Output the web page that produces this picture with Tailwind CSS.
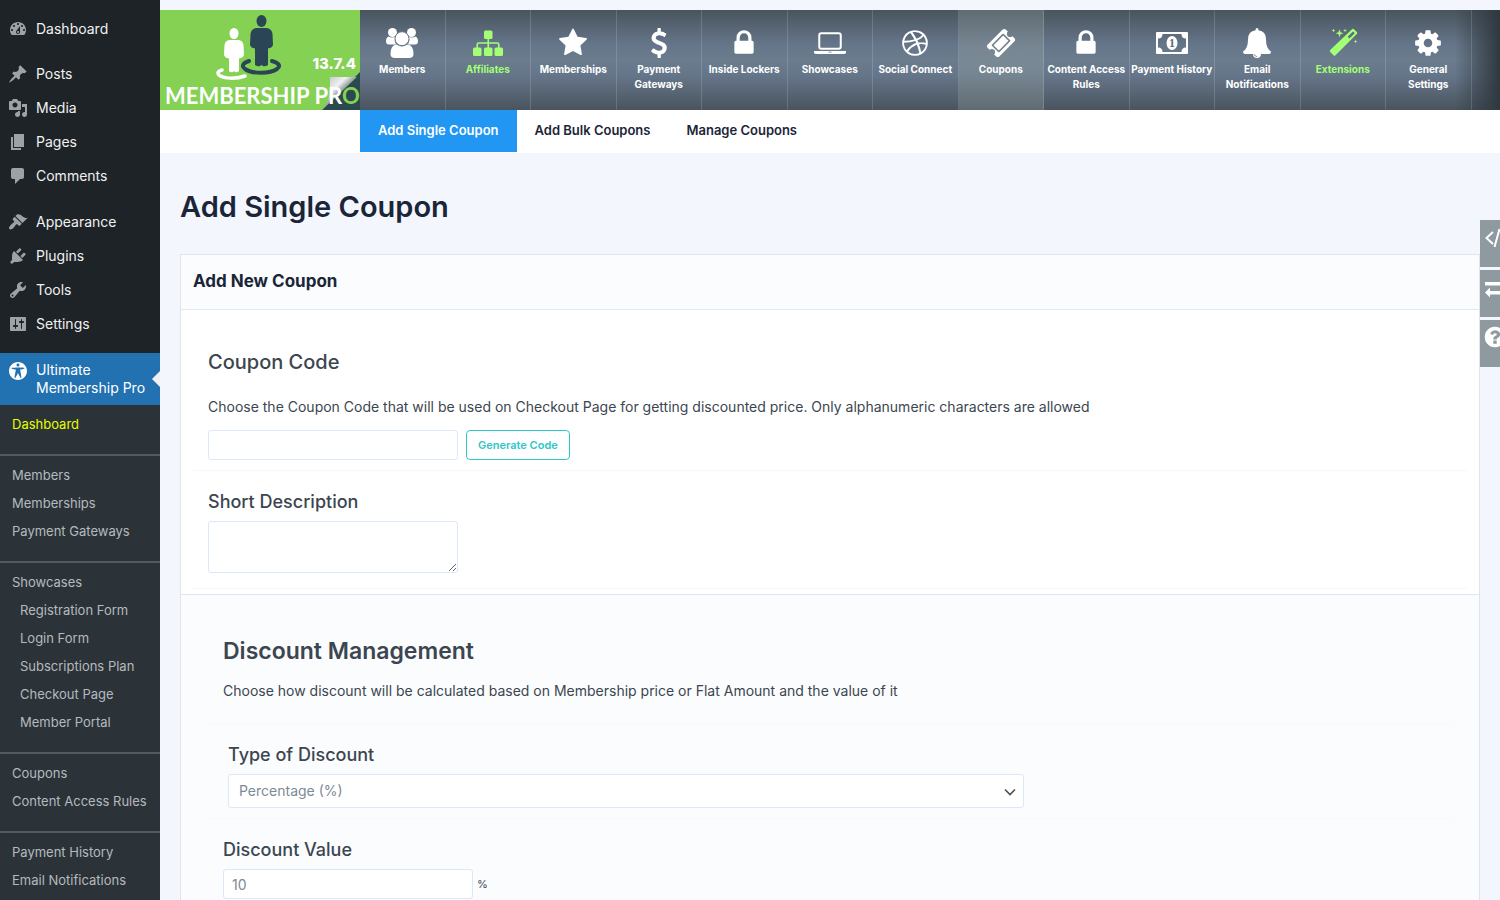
<!DOCTYPE html>
<html lang="en">
<head>
    <meta charset="UTF-8">
    <meta name="viewport" content="width=device-width, initial-scale=1">
    <script src="https://cdn.jsdelivr.net/npm/@tailwindcss/browser@4"></script>
    <title>Add Single Coupon</title>
</head>
<body class="flex min-h-screen bg-[#f4f6fe] font-['Inter',sans-serif] text-[#3b4650]">
    <!--Admin Sidebar-->
    <aside class="w-40 shrink-0 bg-[#1d2327] text-sm text-[#f0f0f1]">
        <nav class="pt-3">
            <a href="#" class="flex h-[34px] items-center gap-2 pl-2">
                <svg class="size-5 text-[#9ca2a7]" viewBox="0 0 20 20" fill="currentColor"><path d="M3.76 16h12.48c1.1-1.37 1.76-3.11 1.76-5 0-4.42-3.58-8-8-8s-8 3.58-8 8c0 1.89.66 3.63 1.76 5zM10 4c.55 0 1 .45 1 1s-.45 1-1 1-1-.45-1-1 .45-1 1-1zM6 6c.55 0 1 .45 1 1s-.45 1-1 1-1-.45-1-1 .45-1 1-1zm8 0c.55 0 1 .45 1 1s-.45 1-1 1-1-.45-1-1 .45-1 1-1zm-5.37 5.55L12 7v6c0 1.1-.9 2-2 2s-2-.9-2-2c0-.57.24-1.08.63-1.45zM4 10c.55 0 1 .45 1 1s-.45 1-1 1-1-.45-1-1 .45-1 1-1zm12 0c.55 0 1 .45 1 1s-.45 1-1 1-1-.45-1-1 .45-1 1-1zm-5 3c0-.55-.45-1-1-1s-1 .45-1 1 .45 1 1 1 1-.45 1-1z" fill-rule="evenodd"/></svg>
                Dashboard
            </a>
            <div class="mt-[11px]">
                <a href="#" class="flex h-[34px] items-center gap-2 pl-2">
                    <svg class="size-5 text-[#9ca2a7]" viewBox="0 0 20 20" fill="currentColor"><path d="M10.44 3.02l1.82-1.82 6.36 6.35-1.83 1.82c-1.05-.68-2.48-.57-3.41.36l-.75.75c-.92.93-1.04 2.35-.35 3.41l-1.83 1.82-2.41-2.41-2.8 2.79c-.42.42-3.38 2.71-3.8 2.29s1.86-3.39 2.28-3.81l2.79-2.79L4.1 9.36l1.83-1.82c1.05.69 2.48.57 3.4-.36l.75-.75c.93-.92 1.05-2.35.36-3.41z"/></svg>
                    Posts
                </a>
                <a href="#" class="flex h-[34px] items-center gap-2 pl-2">
                    <svg class="size-5 text-[#9ca2a7]" viewBox="0 0 20 20" fill="currentColor"><path fill-rule="evenodd" d="M13 11V4c0-.55-.45-1-1-1h-1.67L9 1H5L3.67 3H2c-.55 0-1 .45-1 1v7c0 .55.45 1 1 1h10c.55 0 1-.45 1-1zM7 4.5c1.38 0 2.5 1.12 2.5 2.5S8.38 9.5 7 9.5 4.5 8.38 4.5 7 5.62 4.5 7 4.5zM14 6h5v10.5c0 1.38-1.12 2.5-2.5 2.5S14 17.88 14 16.5s1.12-2.5 2.5-2.5c.17 0 .34.02.5.05V9h-3V6zm-4 8.05V13h2v3.5c0 1.38-1.12 2.5-2.5 2.5S7 17.88 7 16.5 8.12 14 9.5 14c.17 0 .34.02.5.05z"/></svg>
                    Media
                </a>
                <a href="#" class="flex h-[34px] items-center gap-2 pl-2">
                    <svg class="size-5 text-[#9ca2a7]" viewBox="0 0 20 20" fill="currentColor"><path d="M6 15V2h10v13H6zm-1 1h8v2H3V5h2v11z"/></svg>
                    Pages
                </a>
                <a href="#" class="flex h-[34px] items-center gap-2 pl-2">
                    <svg class="size-5 text-[#9ca2a7]" viewBox="0 0 20 20" fill="currentColor"><path d="M5 2h9c1.1 0 2 .9 2 2v7c0 1.1-.9 2-2 2h-2l-5 5v-5H5c-1.1 0-2-.9-2-2V4c0-1.1.9-2 2-2z"/></svg>
                    Comments
                </a>
            </div>
            <div class="my-3">
                <a href="#" class="flex h-[34px] items-center gap-2 pl-2">
                    <svg class="size-5 text-[#9ca2a7]" viewBox="0 0 20 20" fill="currentColor"><path d="M14.48 11.06L7.41 3.99l1.5-1.5c.5-.56 2.3-.47 3.51.32 1.21.8 1.43 1.28 2.91 2.1 1.18.64 2.45 1.26 4.45.85zm-.71.71L6.7 4.7 4.93 6.47c-.39.39-.39 1.02 0 1.41l1.06 1.06c.39.39.39 1.03 0 1.42-.6.6-1.43 1.11-2.21 1.69-.35.26-.7.53-1.01.84C1.43 14.23.4 16.08 1.4 17.07c.99 1 2.84-.03 4.18-1.36.31-.31.58-.66.85-1.02.57-.78 1.08-1.61 1.69-2.21.39-.39 1.02-.39 1.41 0l1.06 1.06c.39.39 1.02.39 1.41 0z"/></svg>
                    Appearance
                </a>
                <a href="#" class="flex h-[34px] items-center gap-2 pl-2">
                    <svg class="size-5 text-[#9ca2a7]" viewBox="0 0 20 20" fill="currentColor"><path d="M13.11 4.36L9.87 7.6 8 5.73l3.24-3.24c.35-.34 1.05-.2 1.56.32.52.51.66 1.21.31 1.55zm-8 1.77l.91-1.12 9.01 9.01-1.19.84c-.71.71-2.63 1.16-3.82 1.16H6.14L4.9 17.26c-.59.59-1.54.59-2.12 0-.59-.58-.59-1.53 0-2.12l1.24-1.24v-3.88c0-1.13.4-3.19 1.09-3.89zm7.26 3.97l3.24-3.24c.34-.35 1.04-.21 1.55.31.52.51.66 1.21.31 1.55l-3.24 3.25z"/></svg>
                    Plugins
                </a>
                <a href="#" class="flex h-[34px] items-center gap-2 pl-2">
                    <svg class="size-5 text-[#9ca2a7]" viewBox="0 0 20 20" fill="currentColor"><path d="M16.68 9.77c-1.34 1.34-3.3 1.67-4.95.99l-5.41 6.52c-.99.99-2.59.99-3.58 0s-.99-2.59 0-3.57l6.52-5.42c-.68-1.65-.35-3.61.99-4.95 1.28-1.28 3.12-1.62 4.72-1.06l-2.89 2.89 2.82 2.82 2.86-2.87c.53 1.58.18 3.39-1.08 4.65zM3.81 16.21c.4.39 1.04.39 1.43 0 .4-.4.4-1.04 0-1.43-.39-.4-1.03-.4-1.43 0-.39.39-.39 1.03 0 1.43z"/></svg>
                    Tools
                </a>
                <a href="#" class="flex h-[34px] items-center gap-2 pl-2">
                    <svg class="size-5 text-[#9ca2a7]" viewBox="0 0 20 20" fill="currentColor"><path d="M18 16V4c0-.55-.45-1-1-1H3c-.55 0-1 .45-1 1v12c0 .55.45 1 1 1h14c.55 0 1-.45 1-1zM8 11h1c.55 0 1 .45 1 1s-.45 1-1 1H8v1.5c0 .28-.22.5-.5.5s-.5-.22-.5-.5V13H6c-.55 0-1-.45-1-1s.45-1 1-1h1V5.5c0-.28.22-.5.5-.5s.5.22.5.5V11zm5-2h-1c-.55 0-1-.45-1-1s.45-1 1-1h1V5.5c0-.28.22-.5.5-.5s.5.22.5.5V7h1c.55 0 1 .45 1 1s-.45 1-1 1h-1v5.500c0 .28-.22.5-.5.5s-.5-.22-.5-.5V9z"/></svg>
                    Settings
                </a>
            </div>
            <a href="#" class="relative flex h-[52px] gap-2 bg-[#2271b1] py-2 pl-2 leading-[18px] text-white">
                <svg class="size-5 shrink-0" viewBox="0 0 20 20" fill="currentColor"><path d="M19 10c0-4.970-4.030-9-9-9s-9 4.030-9 9 4.030 9 9 9 9-4.030 9-9zm-9-7.400c.83 0 1.500.67 1.500 1.500s-.67 1.510-1.500 1.510c-.82 0-1.500-.68-1.500-1.510s.68-1.500 1.500-1.500zM3.400 7.360c0-.65 6.600-.76 6.600-.76s6.600.11 6.600.76-4.470 1.400-4.470 1.400 1.690 8.140 1.060 8.380c-.62.24-3.190-5.190-3.190-5.190s-2.560 5.430-3.180 5.190c-.63-.24 1.060-8.380 1.060-8.380S3.400 8.010 3.400 7.360z"/></svg>
                <span>Ultimate<br>Membership Pro</span>
                <span class="absolute top-[18px] right-0 border-y-8 border-r-8 border-y-transparent border-r-[#f0f0f1]"></span>
            </a>
        </nav>

        <!--Plugin Submenu-->
        <nav class="bg-[#2c3338] text-[13px] text-[#b5babf]">
            <div class="pt-[5px] pb-4">
                <a href="#" class="flex h-7 items-center pl-3 text-[#e4ff00]">Dashboard</a>
            </div>
            <div class="border-t-2 border-[#4f5a62] pt-[5px] pb-4">
                <a href="#" class="flex h-7 items-center pl-3">Members</a>
                <a href="#" class="flex h-7 items-center pl-3">Memberships</a>
                <a href="#" class="flex h-7 items-center pl-3">Payment Gateways</a>
            </div>
            <div class="border-t-2 border-[#4f5a62] pt-[5px] pb-4">
                <a href="#" class="flex h-7 items-center pl-3">Showcases</a>
                <a href="#" class="flex h-7 items-center pl-5">Registration Form</a>
                <a href="#" class="flex h-7 items-center pl-5">Login Form</a>
                <a href="#" class="flex h-7 items-center pl-5">Subscriptions Plan</a>
                <a href="#" class="flex h-7 items-center pl-5">Checkout Page</a>
                <a href="#" class="flex h-7 items-center pl-5">Member Portal</a>
            </div>
            <div class="border-t-2 border-[#4f5a62] pt-[5px] pb-4">
                <a href="#" class="flex h-7 items-center pl-3">Coupons</a>
                <a href="#" class="flex h-7 items-center pl-3">Content Access Rules</a>
            </div>
            <div class="border-t-2 border-[#4f5a62] pt-[5px] pb-1.5">
                <a href="#" class="flex h-7 items-center pl-3">Payment History</a>
                <a href="#" class="flex h-7 items-center pl-3">Email Notifications</a>
            </div>
        </nav>
    </aside>

    <div class="min-w-0 flex-1 pt-[10px]">
        <!--Header-->
        <header class="flex h-[100px]">
            <a href="#" class="relative w-[200px] shrink-0" aria-label="Membership Pro">
                <svg class="h-[100px] w-[200px]" viewBox="0 0 200 100">
                    <defs>
                        <linearGradient id="curl" x1="0" y1="0" x2="1" y2="1">
                            <stop offset="0" stop-color="#b9babd"/>
                            <stop offset=".35" stop-color="#f1f1f3"/>
                            <stop offset=".5" stop-color="#8f9896"/>
                        </linearGradient>
                    </defs>
                    <rect width="200" height="100" fill="#84d154"/>
                    <!-- white member -->
                    <path d="M62 60c-4 1-5 3-3 5 4 4 18 4 26 1" fill="none" stroke="#fff" stroke-width="3.5" stroke-linecap="round"/>
                    <ellipse cx="74" cy="23.500" rx="4.500" ry="5.500" fill="#fff"/>
                    <path d="M69 30q-4 1-4.500 5l-.5 10q1 3 5 3.500V61q2 2 4 1l1-1 1 1q2 1 4-1V48.500q4-.5 5-3.500l-.5-10q-.5-4-4.500-5z" fill="#fff"/>
                    <!-- dark member -->
                    <path d="M89 51c-6 2-8 5-4 8 7 5 25 5 32 0 4-3 2-6-5-8" fill="none" stroke="#2a4656" stroke-width="4" stroke-linecap="round"/>
                    <ellipse cx="101.500" cy="11" rx="5" ry="6" fill="#2a4656"/>
                    <path d="M96 18q-5 1-5.500 6L90 35q1 3 5 3.500V55q3 2 5 1l1.500-1 1.500 1q2 1 5-1V38.500q4-.5 5-3.500l-.5-11q-.5-5-5.500-6z" fill="#2a4656"/>
                    <path d="M162 100L200 62V100z" fill="#2b4a50"/>
                    <path d="M170 67H197L162 100Q170 90 170 80z" fill="url(#curl)"/>
                    <text x="5" y="94" fill="#fff" font-family="Lato" font-weight="700" font-size="22">MEMBERSHIP PR<tspan fill="#84d154">O</tspan></text>
                </svg>
                <span class="absolute top-11 right-1 text-[15px] leading-5 font-extrabold text-white">13.7.4</span>
            </a>
            <nav class="flex flex-1 bg-[linear-gradient(to_right,transparent_96%,#2f383f),linear-gradient(to_bottom,#49545e,#66768a_35%,#6b7c8d_50%,#66768a_65%,#49545e)] text-center text-[10px] leading-[15px] font-bold text-white">
                <a href="#" class="flex w-[7.5%] flex-col items-center border-r border-white/15 pt-[18px]">
                    <svg class="mb-1 h-[30px] w-8" viewBox="0 0 32 30" fill="currentColor"><circle cx="6.500" cy="4.500" r="4.500"/><circle cx="25.500" cy="4.500" r="4.500"/><path d="M2.500 8.500Q5 10 9 9q-1 4 1 7.500H3q-3 0-3-3 0-4 2.500-5zM29.500 8.500Q27 10 23 9q1 4-1 7.500h7q3 0 3-3 0-4-2.500-5z"/><circle cx="16" cy="10.700" r="7" stroke="#66768a" stroke-width="1"/><path d="M10.500 16.500q5.500 4 11 0 6 .5 6 9.500 0 4-4.500 4H9q-4.500 0-4.500-4 0-9 6-9.500z"/></svg>
                    Members
                </a>
                <a href="#" class="flex w-[7.5%] flex-col items-center border-r border-white/15 pt-[18px] text-[#a3ff73]">
                    <svg class="mb-1 h-[30px] w-8" viewBox="0 0 32 30" fill="currentColor"><rect x="12" y="2.500" width="8.500" height="8.500" rx="1.500"/><rect x="1" y="19.500" width="8.500" height="8.500" rx="1.500"/><rect x="12" y="19.500" width="8.500" height="8.500" rx="1.500"/><rect x="22.500" y="19.500" width="8.500" height="8.500" rx="1.500"/><path d="M16.250 10v10M5.250 20v-3.500q0-1.500 1.500-1.500h18.500q1.500 0 1.500 1.500V20" fill="none" stroke="currentColor" stroke-width="1.600"/></svg>
                    Affiliates
                </a>
                <a href="#" class="flex w-[7.5%] flex-col items-center border-r border-white/15 pt-[18px]">
                    <svg class="mb-1 size-[30px]" viewBox="0 0 1792 1792" fill="currentColor"><path d="M1728 647q0 22-26 48l-363 354 86 500q1 7 1 20 0 21-10.500 35.500t-30.500 14.500q-19 0-40-12l-449-236-449 236q-22 12-40 12-21 0-31.500-14.500t-10.500-35.500q0-6 2-20l86-500-364-354q-25-27-25-48 0-37 56-46l502-73 225-455q19-41 49-41t49 41l225 455 502 73q56 9 56 46z"/></svg>
                    Memberships
                </a>
                <a href="#" class="flex w-[7.5%] flex-col items-center border-r border-white/15 pt-[18px]">
                    <svg class="mb-1 size-[30px]" viewBox="0 0 1792 1792" fill="currentColor"><path d="M1362 1185q0 153-99.500 263.500t-258.500 136.500v175q0 14-9 23t-23 9h-135q-13 0-22.500-9.500t-9.500-22.500v-175q-66-9-127.500-31t-101.500-44.500-74-48-46.500-37.500-17.500-18q-17-21-2-41l103-135q7-10 23-12 15-2 24 9l2 2q113 99 243 125 37 8 74 8 81 0 142.500-43t61.500-122q0-28-15-53t-33.500-42-58.500-37.500-66-32-80-32.500q-39-16-61.500-25t-61.500-26.500-62.500-31-56.500-35.500-53.500-42.500-43.500-49-35.500-58-21-66.500-8.500-78q0-138 98-242t255-134v-180q0-13 9.500-22.500t22.500-9.500h135q14 0 23 9t9 23v176q57 6 110.500 23t87 33.500 63.500 37.500 39 29 15 14q17 18 5 38l-81 146q-8 15-23 16-14 3-27-7-3-3-14.500-12t-39-26.500-58.500-32-74.500-26-85.500-11.500q-95 0-155 43t-60 111q0 26 8.500 48t29.500 41.500 39.500 33 56 31 60.500 27 70 27.500q53 20 81 31.500t76 35 75.500 42.500 62 50 53 63.500 31.500 76.500 13 94z"/></svg>
                    Payment<br>Gateways
                </a>
                <a href="#" class="flex w-[7.5%] flex-col items-center border-r border-white/15 pt-[18px]">
                    <svg class="mb-1 size-[30px]" viewBox="0 0 1792 1792" fill="currentColor"><path d="M640 768h512v-192q0-106-75-181t-181-75-181 75-75 181v192zm832 96v576q0 40-28 68t-68 28h-960q-40 0-68-28t-28-68v-576q0-40 28-68t68-28h32v-192q0-184 132-316t316-132 316 132 132 316v192h32q40 0 68 28t28 68z"/></svg>
                    Inside Lockers
                </a>
                <a href="#" class="flex w-[7.5%] flex-col items-center border-r border-white/15 pt-[18px]">
                    <svg class="mb-1 h-[30px] w-8" viewBox="0 0 32 30" fill="currentColor"><rect x="5.250" y="5.250" width="21.500" height="15.500" rx="2" fill="none" stroke="currentColor" stroke-width="2"/><path fill-rule="evenodd" d="M0 23h32v1.500q0 1.500-2.500 1.500h-27Q0 26 0 24.500zm14.500.7v.8h3v-.8z"/></svg>
                    Showcases
                </a>
                <a href="#" class="flex w-[7.5%] flex-col items-center border-r border-white/15 pt-[18px]">
                    <svg class="mb-1 size-[30px]" viewBox="0 0 1792 1792" fill="currentColor"><path d="M1152 1500q-42-241-140-498h-2l-2 1q-16 6-43 16.500t-101 49-137 82-131 114.500-103 148l-15-11q184 150 418 150 132 0 256-52zm-185-607q-21-49-53-111-311 93-673 93-1 7-1 21 0 124 44 236.500t124 201.500q50-89 123.500-166.500t142.500-124.500 130.500-81 99.500-48l37-13q4-1 13-3.500t13-4.500zm-107-212q-120-213-244-378-138 65-234 186t-128 272q302 0 606-80zm684 319q-210-60-409-29 87 239 128 469 111-75 185-189.500t96-250.500zm-215-596q-185-164-433-164-76 0-155 19 131 170 246 382 69-26 130-60.500t96.500-61.500 65.500-57 37.500-40.500zm223 485q-3-232-149-410l-1 1q-9 12-19 24.500t-43.500 44.500-71 60.500-100 65-131.500 64.500q25 53 44 95 2 5 6.500 17t7.500 17q36-5 74.500-7t73.500-2 69 1.500 64 4 56.500 5.500 48 6.500 36.500 6 25 4.500zm112 7q0 209-103 385.500t-279.500 279.500-385.500 103-385.500-103-279.500-279.500-103-385.500 103-385.500 279.500-279.500 385.500-103 385.500 103 279.500 279.500 103 385.500z"/></svg>
                    Social Connect
                </a>
                <a href="#" class="flex w-[7.5%] flex-col items-center border-r border-white/15 bg-[#a6b3ab]/25 pt-[18px]">
                    <svg class="mb-1 size-[30px]" viewBox="0 0 1792 1792" fill="currentColor"><path d="M1024 452l316 316-572 572-316-316zm-211 979l618-618q19-19 19-45t-19-45l-362-362q-18-18-45-18t-45 18l-618 618q-19 19-19 45t19 45l362 362q18 18 45 18t45-18zm889-637l-907 908q-37 37-90.500 37t-90.500-37l-126-126q56-56 56-136t-56-136-136-56-136 56l-125-126q-37-37-37-90.500t37-90.500l907-906q37-37 90.500-37t90.500 37l125 125q-56 56-56 136t56 136 136 56 136-56l126 125q37 37 37 90.500t-37 90.500z"/></svg>
                    Coupons
                </a>
                <a href="#" class="flex w-[7.5%] flex-col items-center border-r border-white/15 pt-[18px]">
                    <svg class="mb-1 size-[30px]" viewBox="0 0 1792 1792" fill="currentColor"><path d="M640 768h512v-192q0-106-75-181t-181-75-181 75-75 181v192zm832 96v576q0 40-28 68t-68 28h-960q-40 0-68-28t-28-68v-576q0-40 28-68t68-28h32v-192q0-184 132-316t316-132 316 132 132 316v192h32q40 0 68 28t28 68z"/></svg>
                    <span class="whitespace-nowrap">Content Access</span>Rules
                </a>
                <a href="#" class="flex w-[7.5%] flex-col items-center border-r border-white/15 pt-[18px]">
                    <svg class="mb-1 h-[30px] w-8" viewBox="0 0 32 30" fill="currentColor"><path fill-rule="evenodd" d="M1 4h30q1 0 1 1v20q0 1-1 1H1q-1 0-1-1V5q0-1 1-1zm5.500 2q0 4.500-4.500 4.500v9q4.500 0 4.500 4.500h19q0-4.500 4.500-4.500v-9q-4.500 0-4.500-4.500z"/><ellipse cx="16" cy="15" rx="5.500" ry="7"/><text x="16" y="19" text-anchor="middle" font-family="Liberation Serif" font-weight="700" font-size="12" fill="#5c6b7b">1</text></svg>
                    <span class="whitespace-nowrap">Payment History</span>
                </a>
                <a href="#" class="flex w-[7.5%] flex-col items-center border-r border-white/15 pt-[18px]">
                    <svg class="mb-1 h-[30px] w-8" viewBox="0 0 32 30" fill="currentColor"><path d="M16 0q1.500 0 1.500 2.200 7.500 1 7.500 9.300 0 9 5 12 0 2.500-2 2.500h-8q0 4-4 4t-4-4H4q-2 0-2-2.500 5-3 5-12 0-8.300 7.500-9.300Q14.500 0 16 0z"/><path d="M13.300 26.200q.4 2.200 2.700 2.400" fill="none" stroke="#66768a" stroke-width=".8"/></svg>
                    Email<br>Notifications
                </a>
                <a href="#" class="flex w-[7.5%] flex-col items-center border-r border-white/15 pt-[18px] text-[#a3ff73]">
                    <svg class="mb-1 size-[30px]" viewBox="0 0 30 30" fill="currentColor"><path fill-rule="evenodd" d="M24 1.200q1-1 2 0l2.800 2.800q1 1 0 2L7.500 27.300q-1 1-2 0l-3.300-3.300q-1-1 0-2zM25 3.500l-5.300 5.300 1.700 1.700 5.300-5.300z"/><path d="M11.500 1.200l1 3 3 1-3 1-1 3-1-3-3-1 3-1zM5.500.5l.5 1.500 1.500.5L6 3l-.5 1.500L5 3l-1.500-.5L5 2zM17 .5l.5 1.500 1.500.5-1.500.5-.5 1.500-.5-1.500-1.500-.5 1.500-.5zM27.500 11.500l.5 1.500 1.500.5-1.500.5-.5 1.500-.5-1.500-1.500-.5 1.500-.5z"/></svg>
                    Extensions
                </a>
                <a href="#" class="flex w-[7.5%] flex-col items-center border-r border-white/15 pt-[18px]">
                    <svg class="mb-1 size-[30px]" viewBox="0 0 1792 1792" fill="currentColor"><path d="M1152 896q0-106-75-181t-181-75-181 75-75 181 75 181 181 75 181-75 75-181zm512-109v222q0 12-8 23t-20 13l-185 28q-19 54-39 91 35 50 107 138 10 12 10 25t-9 23q-27 37-99 108t-94 71q-12 0-26-9l-138-108q-44 23-91 38-16 136-29 186-7 28-36 28h-222q-14 0-24.500-8.500t-11.500-21.500l-28-184q-49-16-90-37l-141 107q-10 9-25 9-14 0-25-11-126-114-165-168-7-10-7-23 0-12 8-23 15-21 51-66.500t54-70.500q-27-50-41-99l-183-27q-13-2-21-12.500t-8-23.500v-222q0-12 8-23t19-13l186-28q14-46 39-92-40-57-107-138-10-12-10-24 0-10 9-23 26-36 98.500-107.500t94.500-71.500q13 0 26 10l138 107q44-23 91-38 16-136 29-186 7-28 36-28h222q14 0 24.500 8.500t11.500 21.500l28 184q49 16 90 37l142-107q9-9 24-9 13 0 25 10 129 119 165 170 7 8 7 22 0 12-8 23-15 21-51 66.500t-54 70.500q26 50 41 98l183 28q13 2 21 12.500t8 23.500z"/></svg>
                    General<br>Settings
                </a>
            </nav>
        </header>

        <!--Tabs-->
        <nav class="flex h-[43px] items-start bg-white pl-[200px] text-[13px] font-semibold text-[#1a2638]">
            <a href="#" class="flex h-[42px] items-center bg-[#2196f3] px-[18px] text-white">Add Single Coupon</a>
            <a href="#" class="flex h-[42px] items-center px-[18px]">Add Bulk Coupons</a>
            <a href="#" class="flex h-[42px] items-center px-[18px]">Manage Coupons</a>
        </nav>

        <main class="px-5 pt-8">
            <h1 class="text-[29px] leading-[44px] font-semibold text-[#1a2638]">Add Single Coupon</h1>

            <form class="mt-[25px] border border-b-0 border-[#e2e4e9] bg-white">
                <h3 class="flex h-[55px] items-center border-b border-[#e0e8f0] bg-[#fbfcfe] px-3 text-[17px] font-bold text-[#1a2638]">Add New Coupon</h3>

                <!--Coupon Code-->
                <div class="mx-3 border-b border-[#f6f7f9] px-[15px] pt-[39px] pb-[10px]">
                    <label for="couponCode" class="block text-xl leading-[26px] font-medium">Coupon Code</label>
                    <p class="mt-[22px] text-sm leading-5">Choose the Coupon Code that will be used on Checkout Page for getting discounted price. Only alphanumeric characters are allowed</p>
                    <div class="mt-[13px] flex items-center gap-2">
                        <input id="couponCode" type="text" class="h-[30px] w-[250px] rounded-[3px] border border-[#dbe7fb] bg-white px-2">
                        <button type="button" class="h-[30px] rounded border border-[#2fc6c9] px-[11px] text-[11px] font-semibold text-[#2fc6c9]">Generate Code</button>
                    </div>
                </div>

                <!--Short Description-->
                <div class="mx-3 border-b border-[#f6f7f9] px-[15px] pt-[18px] pb-[15px]">
                    <label for="shortDescription" class="block text-lg leading-[26px] font-medium">Short Description</label>
                    <textarea id="shortDescription" class="mt-1.5 block h-[52px] w-[250px] rounded-[3px] border border-[#dbe7fb] bg-white px-2"></textarea>
                </div>

                <!--Discount Management-->
                <div class="mt-[5px] border-t border-[#dbe7fb] bg-[#fbfcfe] px-[27px] pb-px">
                    <div class="border-b border-[#f7f9fb] px-[15px] pt-10 pb-[22px]">
                        <h2 class="text-[23px] leading-8 font-semibold">Discount Management</h2>
                        <p class="mt-[14px] text-sm leading-5">Choose how discount will be calculated based on Membership price or Flat Amount and the value of it</p>
                    </div>
                    <div class="border-b border-[#f7f9fb] pt-[18px] pb-[10px] pl-5">
                        <label for="discountType" class="block text-lg leading-[26px] font-medium">Type of Discount</label>
                        <div class="relative mt-1.5 w-[65%]">
                            <select id="discountType" class="block h-[34px] w-full appearance-none rounded-[3px] border border-[#dbe7fb] bg-white px-[10px] text-sm text-[#7d8a95]">
                                <option>Percentage (%)</option>
                                <option>Flat Amount</option>
                            </select>
                            <svg class="pointer-events-none absolute top-3 right-2 size-3" viewBox="0 0 12 12" fill="none" stroke="#4a4f54" stroke-width="1.600"><path d="M1 3.500l5 5 5-5"/></svg>
                        </div>
                    </div>
                    <div class="px-[15px] pt-[18px]">
                        <label for="discountValue" class="block text-lg leading-[26px] font-medium">Discount Value</label>
                        <div class="mt-1.5 flex items-center gap-1">
                            <input id="discountValue" type="text" value="10" class="h-[30px] w-[250px] rounded-[3px] border border-[#dbe7fb] bg-white px-2 text-sm text-[#7d8a95]">
                            <span class="text-[11px]">%</span>
                        </div>
                    </div>
                </div>
            </form>
        </main>
    </div>

    <!--Side Shortcuts-->
    <div class="fixed top-[220px] right-0 flex w-5 flex-col gap-[3px] overflow-hidden">
        <a href="#" aria-label="Shortcodes" class="h-[47px] bg-[#8e9a9f] pt-[7px] pl-[5px]">
            <svg class="h-[22px] w-6" viewBox="0 0 24 22" fill="none" stroke="#fff" stroke-width="2"><path d="M8 5l-6.500 6L8 17M14.500 2l-5 18M16 5l6.500 6L16 17"/></svg>
        </a>
        <a href="#" aria-label="Hooks" class="h-[47px] bg-[#8e9a9f] pt-[10px] pl-[5px]">
            <svg class="h-5 w-6" viewBox="0 0 24 20" fill="#fff"><path d="M0 2h18v3.500H0zM0 12.500l5-5V11h19v3.500H5v3z"/></svg>
        </a>
        <a href="#" aria-label="Help" class="h-[47px] bg-[#8e9a9f] pt-[5px] pl-[3px]">
            <svg class="size-6" viewBox="0 0 1792 1792" fill="#fff"><path d="M1024 1376v-192q0-14-9-23t-23-9h-192q-14 0-23 9t-9 23v192q0 14 9 23t23 9h192q14 0 23-9t9-23zm256-672q0-88-55.500-163t-138.500-116-170-41q-243 0-371 213-15 24 8 42l132 100q7 6 19 6 16 0 25-12 53-68 86-92 34-24 86-24 48 0 85.500 26t37.500 59q0 38-20 61t-68 45q-63 28-115.500 86.500t-52.500 125.500v36q0 14 9 23t23 9h192q14 0 23-9t9-23q0-19 21.500-49.500t54.500-49.500q32-18 49-28.500t46-35 44.500-48 28-60.500 12.500-81zm384 192q0 209-103 385.500t-279.500 279.500-385.500 103-385.500-103-279.500-279.500-103-385.500 103-385.500 279.500-279.500 385.500-103 385.500 103 279.500 279.500 103 385.500z"/></svg>
        </a>
    </div>
</body>
</html>
